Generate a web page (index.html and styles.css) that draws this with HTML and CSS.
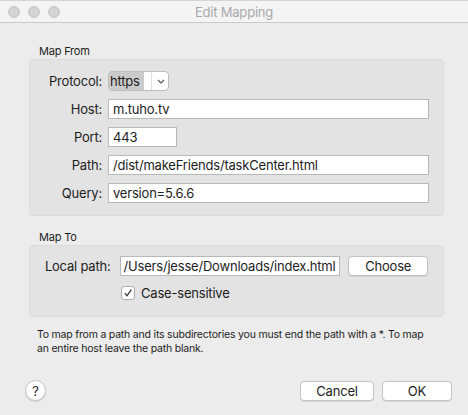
FILE: index.html
```html
<!DOCTYPE html>
<html>
<head>
<meta charset="utf-8">
<link rel="stylesheet" href="styles.css">
</head>
<body>
<div class="window">
  <div class="titlebar">
    <div class="lights"><span class="light"></span><span class="light"></span><span class="light"></span></div>
    <div class="title">Edit Mapping</div>
  </div>
  <div class="content">
    <div class="section-label first">Map From</div>
    <div class="group from">
      <label class="lbl">Protocol:</label>
      <div class="popup"><span class="popup-val">https</span><span class="popup-sep"></span><svg class="chev" width="8" height="5" viewBox="0 0 8 5"><path d="M1 1 L4 4 L7 1" fill="none" stroke="#555" stroke-width="1.1"/></svg></div>
      <label class="lbl">Host:</label>
      <div class="field">m.tuho.tv</div>
      <label class="lbl">Port:</label>
      <div class="field port">443</div>
      <label class="lbl">Path:</label>
      <div class="field">/dist/makeFriends/taskCenter.html</div>
      <label class="lbl">Query:</label>
      <div class="field">version=5.6.6</div>
    </div>
    <div class="section-label second">Map To</div>
    <div class="group to">
      <div class="to-row">
        <label class="lbl local">Local path:</label>
        <div class="field local-field">/Users/jesse/Downloads/index.html</div>
        <button class="btn choose">Choose</button>
      </div>
      <div class="check-row">
        <span class="checkbox"><svg width="10" height="10" viewBox="0 0 10 10"><path d="M1.8 5.2 L4 7.8 L8.3 1.6" fill="none" stroke="#333" stroke-width="1.3"/></svg></span>
        <span class="check-label">Case-sensitive</span>
      </div>
    </div>
    <p class="note">To map from a path and its subdirectories you must end the path with a *. To map an entire host leave the path blank.</p>
    <div class="footer">
      <button class="help">?</button>
      <div class="actions">
        <button class="btn action cancel">Cancel</button>
        <button class="btn action ok">OK</button>
      </div>
    </div>
  </div>
</div>
</body>
</html>
```

FILE: styles.css
```css
* { box-sizing: border-box; }
html, body { margin: 0; padding: 0; }
body {
  width: 468px;
  height: 415px;
  background: #ececec;
  font-family: Inter, "Liberation Sans", sans-serif;
  letter-spacing: -0.2px;
  color: #1d1d1d;
  overflow: hidden;
}
.window { width: 468px; height: 415px; background: #ececec; }
.titlebar {
  height: 23px;
  background: #f4f4f4;
  border-top: 1px solid #d4d4d4;
  border-bottom: 1px solid #c9c9c9;
  display: flex;
  align-items: center;
  position: relative;
}
.lights { display: flex; gap: 8px; padding-left: 8px; }
.light {
  width: 12px; height: 12px; border-radius: 50%;
  background: #d3d3d3;
  border: 1px solid #c6c6c6;
}
.title {
  position: absolute;
  left: 0; right: 0; top: 3px;
  text-align: center;
  font-size: 13px;
  color: #a9a9a9;
}
.content { padding: 0 24px 0 29px; }
.section-label {
  font-size: 11px;
  padding-left: 10px;
  height: 15px;
  line-height: 15px;
}
.section-label.first { margin-top: 21px; }
.section-label.second { margin-top: 14px; }
.group {
  background: #e3e3e3;
  border: 1px solid #dcdcdc;
  border-radius: 4px;
}
.from {
  display: grid;
  grid-template-columns: 72px 1fr;
  column-gap: 6px;
  row-gap: 8px;
  padding: 11px 14px 12px 0;
  align-items: center;
}
.lbl {
  font-size: 13px;
  text-align: right;
  color: #1d1d1d;
}
.field {
  height: 20px;
  background: #fff;
  border: 1px solid #b8b8b8;
  font-size: 13px;
  line-height: 18px;
  padding-left: 4px;
  white-space: nowrap;
  overflow: hidden;
}
.field.port { width: 69px; }
.popup {
  width: 61px; height: 20px;
  background: #fff;
  border: 1px solid #bdbdbd;
  border-radius: 4px;
  display: flex; align-items: center;
  font-size: 13px;
}
.popup-val {
  background: #cbcbcb;
  height: 18px;
  line-height: 18px;
  padding: 0 1px 0 1px;
  width: 35px;
  flex: none;
}
.popup-sep { width: 1px; height: 18px; background: #e0e0e0; margin-left: 7px; flex: none; }
.chev { margin-left: 5px; flex: none; }
.to { padding: 10px 15px 15px 0; }
.to-row { display: flex; align-items: center; }
.lbl.local { width: 81px; }
.local-field { width: 222px; margin-left: 9px; padding-left: 3px; }
.btn {
  font-family: inherit;
  font-size: 13px;
  letter-spacing: -0.2px;
  color: #1d1d1d;
  background: #fff;
  border: 1px solid #c3c3c3;
  border-radius: 4px;
  box-shadow: 0 1px 0 rgba(0,0,0,0.08);
  height: 20px;
  padding: 0;
  line-height: 18px;
}
.choose { width: 80px; margin-left: 8px; }
.check-row { display: flex; align-items: center; margin-top: 9px; padding-left: 91px; }
.checkbox {
  width: 14px; height: 14px;
  background: #fff;
  border: 1px solid #acacac;
  border-radius: 3px;
  display: flex; align-items: center; justify-content: center;
}
.check-label { font-size: 13px; margin-left: 6px; }
.note {
  font-size: 10.5px;
  line-height: 14px;
  margin: 11px 0 0 8px;
  width: 392px;
  color: #1d1d1d;
}
.footer {
  display: flex;
  align-items: center;
  justify-content: space-between;
  margin-top: 24px;
}
.help {
  width: 21px; height: 21px;
  border-radius: 50%;
  background: #fff;
  border: 1px solid #c4c4c4;
  box-shadow: 0 1px 1px rgba(0,0,0,0.12);
  font-family: inherit;
  font-size: 13px;
  padding: 0;
  margin-left: -4px;
  color: #1d1d1d;
}
.actions { display: flex; gap: 8px; margin-right: -8px; }
.cancel { width: 74px; }
.ok { width: 70px; }
```
